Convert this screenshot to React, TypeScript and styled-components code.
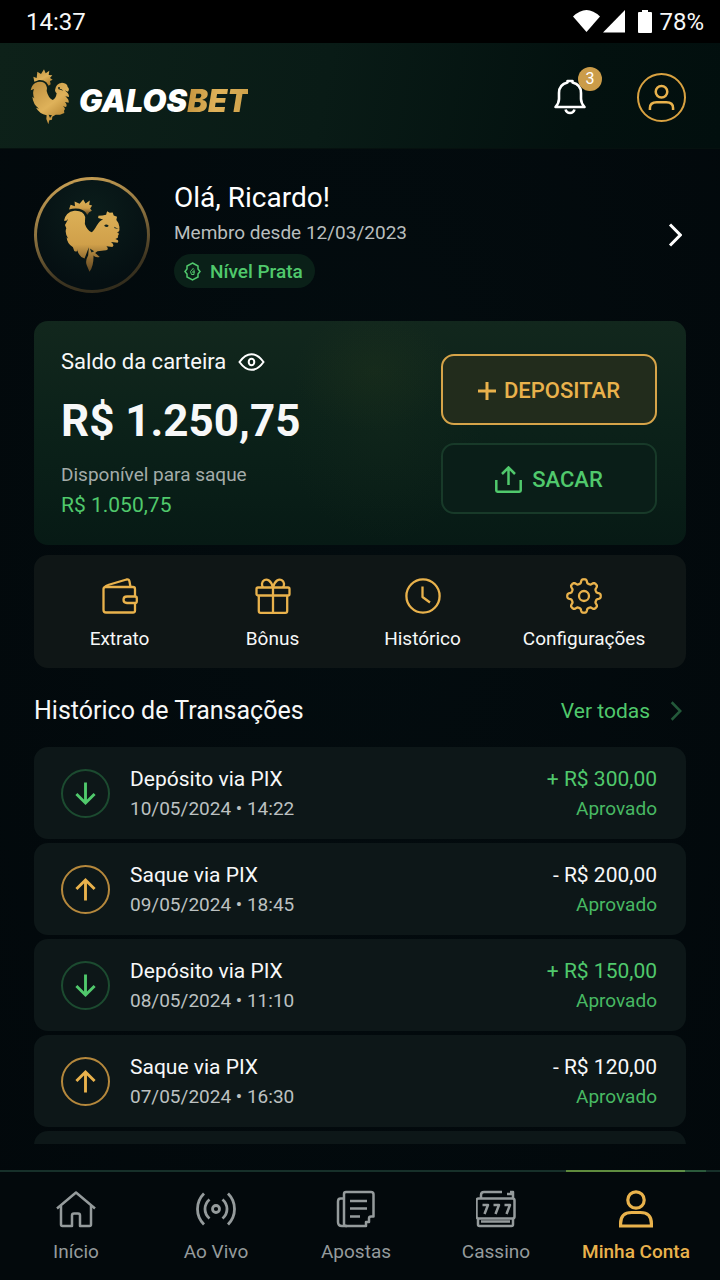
import styled, { createGlobalStyle } from "styled-components"

const gold = '#e9b24c'
const green = '#50c96c'

const GlobalStyle = createGlobalStyle`
    * {
        box-sizing: border-box;
    }

    body {
        margin: 0;
        background-color: #02090c;
        color: #f7f8f8;
        font-family: Roboto, "Liberation Sans", sans-serif;
    }

    h1, h2, p, ul {
        margin: 0;
        padding: 0;
    }

    ul {
        list-style: none;
    }

    a {
        color: inherit;
        text-decoration: none;
    }

    button {
        padding: 0;
        border: none;
        background: none;
        color: inherit;
        font-family: inherit;
        cursor: pointer;
    }

    svg {
        display: block;
        flex-shrink: 0;
    }
`

const Page = styled.div`
    height: 100vh;
    display: flex;
    flex-direction: column;
    background: radial-gradient(ellipse at 50% 40%, #030c0f, #02080b);
`

const StatusBar = styled.div`
    height: 43px;
    flex-shrink: 0;
    padding: 0 16px 0 26px;
    display: flex;
    align-items: center;
    justify-content: space-between;
    background-color: #000;
    font-size: 24px;
    line-height: 28px;

    .status__icons {
        display: flex;
        align-items: center;
    }

    .status__battery {
        margin: 0 7px 0 12px;
    }
`

const HeaderStyles = styled.header`
    height: 106px;
    flex-shrink: 0;
    padding: 3px 34px 0 30px;
    display: flex;
    align-items: center;
    justify-content: space-between;
    background: linear-gradient(100deg, #0d2119 0%, #091b16 45%, #03110f 80%, #020f0e 100%);
    border-bottom: 1px solid #06110f;

    .header__actions {
        display: flex;
        align-items: center;
        gap: 51px;
    }
`

const Logo = styled.a`
    display: flex;
    align-items: center;
    gap: 9px;
    font-family: Inter, Roboto, sans-serif;
    font-size: 31px;
    line-height: 40px;
    font-weight: 900;
    font-style: italic;
    color: #fff;

    .logo__name {
        padding-top: 8px;
    }

    .logo__accent {
        background: linear-gradient(100deg, #c4933d, #dfb25a 50%, #cc9f48);
        background-clip: text;
        color: transparent;
    }
`

const BellButton = styled.button`
    position: relative;

    .bell__badge {
        position: absolute;
        top: -12px;
        right: -16px;
        width: 24px;
        height: 24px;
        border-radius: 50%;
        background-color: #cb9c49;
        color: #fff;
        font-size: 16px;
        line-height: 24px;
        text-align: center;
    }
`

const AccountButton = styled.button`
    width: 49px;
    height: 49px;
    display: grid;
    place-items: center;
    border: 2px solid #d9a241;
    border-radius: 50%;
`

const Content = styled.main`
    flex: 1;
    min-height: 0;
    margin-bottom: 26px;
    padding: 28px 34px 0;
    overflow: hidden;
`

const Profile = styled.a`
    display: flex;
    align-items: center;
    gap: 24px;
    padding-right: 4px;

    .profile__info {
        flex: 1;
        padding-bottom: 2px;
        display: flex;
        flex-direction: column;
        align-items: flex-start;
    }

    .profile__name {
        font-size: 28px;
        line-height: 36px;
        font-weight: 400;
        color: #fff;
    }

    .profile__since {
        margin-bottom: 4px;
        font-size: 19px;
        line-height: 34px;
        color: #b9bebe;
    }
`

const Avatar = styled.div`
    width: 116px;
    height: 116px;
    display: grid;
    place-items: center;
    border: 3px solid transparent;
    border-radius: 50%;
    background:
        radial-gradient(circle at 50% 30%, #0b1d1b, #050f12 75%) padding-box,
        linear-gradient(165deg, #d3a857, #8f7440 40%, #3e3521 75%, #2b2719) border-box;
`

const Level = styled.span`
    height: 34px;
    padding: 0 12px 0 10px;
    display: flex;
    align-items: center;
    gap: 9px;
    border-radius: 17px;
    background-color: #0a2018;
    color: ${green};
    font-size: 19px;
    font-weight: 500;
`

const Balance = styled.section`
    margin-top: 28px;
    padding: 25px 29px 23px 27px;
    min-height: 224px;
    display: flex;
    align-items: center;
    justify-content: space-between;
    border-radius: 14px;
    background:
        radial-gradient(ellipse 80px 60px at 340px 50px, rgba(40, 58, 28, 0.25), transparent),
        radial-gradient(ellipse 100px 110px at 350px 110px, rgba(30, 50, 30, 0.2), transparent),
        linear-gradient(180deg, #12271d 0%, #0b2119 50%, #071a15 100%);

    .balance__title {
        display: flex;
        align-items: center;
        gap: 12px;
        font-size: 22px;
        line-height: 30px;
    }

    .balance__total {
        margin-top: 12px;
        font-size: 44px;
        line-height: 64px;
        font-weight: 700;
    }

    .balance__label {
        margin-top: 8px;
        font-size: 19px;
        line-height: 28px;
        color: #a4aca9;
    }

    .balance__available {
        font-size: 21px;
        line-height: 32px;
        color: ${green};
    }

    .balance__buttons {
        width: 216px;
        display: grid;
        gap: 18px;
    }
`

const WalletButton = styled.button<{ $primary?: boolean }>`
    height: 71px;
    padding-top: 2px;
    display: flex;
    align-items: center;
    justify-content: center;
    gap: ${props => props.$primary ? '8px' : '10px'};
    border: 2px solid ${props => props.$primary ? '#d6a449' : '#183a29'};
    border-radius: 13px;
    background-color: ${props => props.$primary ? '#222c1c' : '#0a1e18'};
    color: ${props => props.$primary ? gold : green};
    font-size: 22px;
    font-weight: 500;
`

const Shortcuts = styled.nav`
    height: 113px;
    margin-top: 10px;
    padding: 0 14px 0 9px;
    display: grid;
    grid-template-columns: 153fr 153fr 147fr 176fr;
    border-radius: 14px;
    background-color: #0f1616;
`

const Shortcut = styled.a`
    padding-top: 23px;
    display: flex;
    flex-direction: column;
    align-items: center;
    gap: 11px;
    font-size: 19px;
    line-height: 28px;

    svg {
        color: ${gold};
    }
`

const SectionHeader = styled.div`
    height: 79px;
    padding: 6px 4px 0 0;
    display: flex;
    align-items: center;
    justify-content: space-between;

    h2 {
        font-size: 25px;
        font-weight: 400;
        line-height: 32px;
    }

    a {
        display: flex;
        align-items: center;
        gap: 20px;
        color: ${green};
        font-size: 21px;
    }
`

const TransactionList = styled.ul`
    display: grid;
    gap: 4px;
`

const TransactionStyles = styled.li<{ $income: boolean }>`
    height: 92px;
    padding: 0 29px 0 27px;
    display: flex;
    align-items: center;
    gap: 20px;
    border-radius: 14px;
    background-color: #0d1718;

    .transaction__icon {
        width: 49px;
        height: 49px;
        display: grid;
        place-items: center;
        border: 2px solid ${props => props.$income ? '#1c4b30' : '#b5883c'};
        border-radius: 50%;
        color: ${props => props.$income ? green : gold};
    }

    .transaction__text {
        flex: 1;
        padding-top: 2px;
        font-size: 21px;
        line-height: 30px;
    }

    .transaction__text--right {
        flex: none;
        text-align: right;
    }

    .transaction__amount {
        color: ${props => props.$income ? green : '#f7f8f8'};
    }

    .transaction__date {
        font-size: 19px;
        color: #bcc1c1;
    }

    .transaction__status {
        font-size: 19px;
        color: #48b963;
    }
`

const TabBar = styled.nav`
    height: 110px;
    flex-shrink: 0;
    padding: 0 14px 0 6px;
    display: grid;
    grid-template-columns: repeat(5, 1fr);
    background: linear-gradient(#17302a, #17302a) top / 100% 2px no-repeat #03090c;
`

const Tab = styled.a<{ $active?: boolean }>`
    padding-top: 20px;
    display: flex;
    flex-direction: column;
    align-items: center;
    gap: 10px;
    background: ${props => props.$active
        ? 'linear-gradient(90deg, #5f8a3c 0%, #5f9146 85%, #2b5a3b 85%) top / 100% 2px no-repeat'
        : 'none'};
    color: ${props => props.$active ? gold : '#959b9c'};
    font-size: 19px;
    font-weight: ${props => props.$active ? 500 : 400};
    line-height: 28px;
`

const Chevron = ({ color, size = 24 }: { color: string, size?: number }) => (
    <svg width={size * 0.6} height={size} viewBox="0 0 14.4 24" fill="none" stroke={color} strokeWidth="3">
        <path d="M2 1.500 12.300 12 2 22.500" />
    </svg>
)

const LogoRooster = () => (
    <svg width="40" height="56" viewBox="0 0 120 168">
        <defs>
            <linearGradient id="logoGold" x1="0" y1="0" x2="0.7" y2="1">
                <stop offset="0" stopColor="#b98c3c" />
                <stop offset="0.6" stopColor="#dfb25a" />
                <stop offset="1" stopColor="#b1812f" />
            </linearGradient>
        </defs>
        <g fill="url(#logoGold)">
            <path d="M13 38 10 23 20 27 22 8 33 15 42 1 47 13 58 5 56 18 67 19 60 27 68 32 60 36 62 46 56 50 49 40Q40 32 27 33Z" />
            <path d="M2 64Q6 43 23 39Q44 36 49 50Q53 57 50 66Q55 87 68 93Q78 88 80 73Q76 72 75 64Q77 43 96 41Q112 42 113 54Q120 60 114 68L104 64Q118 74 117 84L106 82Q118 92 116 101L105 99Q113 108 108 114L98 112Q109 118 102 125L103 132 90 137 77 137 67 143 66 152 58 154 55 166 49 150 50 139Q28 134 18 116L27 119Q9 106 7 83L13 88Q6 73 12 60Z" />
        </g>
        <circle cx="87" cy="57" r="3" fill="#13251a" />
        <path d="M84 60Q94 58 100 65M56 137l10 2-6 8z" fill="#13251a" />
    </svg>
)

const AvatarRooster = () => (
    <svg width="58" height="75" viewBox="0 0 175 225">
        <defs>
            <linearGradient id="avatarGold" x1="0" y1="0" x2="0" y2="1">
                <stop offset="0" stopColor="#dcb057" />
                <stop offset="0.55" stopColor="#d0a04a" />
                <stop offset="0.8" stopColor="#8d6930" />
                <stop offset="1" stopColor="#5f4722" />
            </linearGradient>
        </defs>
        <g fill="url(#avatarGold)">
            <path d="M18 34 23 20 36 24 35 10 50 17 61 4 68 16 81 7 79 20 88 22 82 31 87 38 79 42 73 51Q67 36 49 32Q33 30 18 34Z" />
            <path d="M3 68Q8 42 34 38Q61 36 67 57L66 78Q72 96 86 103Q93 99 101 84Q111 66 121 64L106 60 107 53 119 52 130 50 133 39 141 44 150 43 153 52 163 56 161 66Q172 78 170 91Q172 103 162 103Q173 105 165 114Q170 120 158 123Q171 126 165 134L145 132Q157 142 149 147L131 145Q140 154 130 157L104 160 97 165 111 177Q97 180 92 173Q93 205 80 222L72 203Q66 190 76 172L78 148 65 182Q48 178 42 153Q46 165 34 159L30 148Q12 137 11 118L16 122Q4 104 10 91L6 81 16 62 10 68Z" />
        </g>
        <path d="M124 83Q130 76 138 83Q133 91 124 83M154 86L168 93 156 91M81 152l13 8-8 4z" fill="#102320" />
    </svg>
)

const WifiIcon = () => (
    <svg width="27" height="23" viewBox="0 0 27 23" fill="#fff">
        <path d="M0 6.5Q13.500-6.500 27 6.500L13.500 22Z" />
    </svg>
)

const SignalIcon = () => (
    <svg width="26" height="23" viewBox="0 0 26 23" fill="#fff">
        <path d="M25 0V22.500H3Z" />
    </svg>
)

const BatteryIcon = () => (
    <svg className="status__battery" width="14" height="23" viewBox="0 0 14 23" fill="#fff">
        <path d="M4 0h6v2h3q1 0 1 1v19q0 1-1 1H1q-1 0-1-1V3q0-1 1-1h3z" />
    </svg>
)

const BellIcon = () => (
    <svg width="32" height="36" viewBox="0 0 32 36" fill="none" stroke="#fff" strokeWidth="2.6" strokeLinejoin="round">
        <path d="M13.500 3.500V2h5v1.500C25 5 27 9 27 14v6q0 4 3.500 8H1.500Q5 24 5 20v-6C5 9 7 5 13.500 3.500Z" />
        <path d="M11.500 30.500q1 3.500 4.500 3.500t4.500-3.500" />
    </svg>
)

const AccountIcon = () => (
    <svg width="27" height="27" viewBox="0 0 28 28" fill="none" stroke={gold} strokeWidth="2.600">
        <circle cx="14" cy="8" r="6" />
        <path d="M2 27v-2q0-6 7-6h10q7 0 7 6v2" />
    </svg>
)

const LevelIcon = () => (
    <svg width="17" height="19" viewBox="0 0 17 19" fill="none" stroke={green} strokeWidth="1.5">
        <path d="M8.500 1 14 4v3l2 2.500-2 2.500v3l-5.500 3L3 15v-3L1 9.500 3 7V4Z" />
        <path d="M9.500 6 6.500 9.500l1 3h2.500V7.500M8 10h3" strokeWidth="1" />
    </svg>
)

const EyeIcon = () => (
    <svg width="27" height="18" viewBox="0 0 27 18" fill="none" stroke="#fff" strokeWidth="2">
        <path d="M1.500 9Q7 1.200 13.500 1.200T25.500 9Q20 16.800 13.500 16.800T1.500 9Z" />
        <ellipse cx="13.500" cy="9" rx="2.800" ry="3.300" />
    </svg>
)

const PlusIcon = () => (
    <svg width="18" height="18" viewBox="0 0 18 18" fill="none" stroke={gold} strokeWidth="3">
        <path d="M9 0V18M0 9H18" />
    </svg>
)

const UploadIcon = () => (
    <svg width="27" height="27" viewBox="0 0 27 27" fill="none" stroke={green} strokeWidth="2.500">
        <path d="M13.500 19V2M7 8l6.500-6.500L20 8" />
        <path d="M1.300 14v10.500q0 1.200 1.200 1.200h22q1.200 0 1.200-1.200V14" />
    </svg>
)

const iconProps = {
    width: 36,
    height: 36,
    viewBox: '0 0 36 36',
    fill: 'none',
    stroke: 'currentColor',
    strokeWidth: 2.3,
    strokeLinejoin: 'round' as const,
}

const WalletIcon = () => (
    <svg {...iconProps}>
        <path d="M33 18.500V11q0-2-2-2H3.500q-2 0-2 2v21q0 2.500 2.500 2.500h27q2 0 2-2V25" />
        <path d="M3 9Q4 7.500 6 7L24.500 1.500Q27 1 27.500 3.500L28.500 9" />
        <path d="M33 18.500H25q-3.500 0-3.500 3.200T25 25h8q1.800 0 1.800-1.800v-3q0-1.700-1.800-1.700Z" />
    </svg>
)

const GiftIcon = () => (
    <svg {...iconProps}>
        <rect x="1.500" y="9.500" width="33" height="8" rx="1.500" />
        <path d="M3.800 17.500V33q0 1.800 1.800 1.800h24.800q1.800 0 1.800-1.800V17.500M18 9.500V35" />
        <path d="M18 9.500C16 2 12 1 9.500 2 6.500 3.500 6.500 7 8 9.500M18 9.500C20 2 24 1 26.500 2c3 1.500 3 5 1.500 7.500" />
    </svg>
)

const ClockIcon = () => (
    <svg {...iconProps}>
        <circle cx="18" cy="18" r="16.600" />
        <path d="M17.500 8.500V19L25 24.500" />
    </svg>
)

// eight rounded teeth around the circle
const gearPoints = Array.from({ length: 160 }, (_, i) => {
    const angle = i / 160 * Math.PI * 2
    const radius = 14.8 + 2 * Math.tanh(2 * Math.cos(angle * 8))
    return `${(18 + radius * Math.cos(angle)).toFixed(2)},${(18 + radius * Math.sin(angle)).toFixed(2)}`
}).join(' ')

const GearIcon = () => (
    <svg {...iconProps}>
        <polygon points={gearPoints} />
        <circle cx="18" cy="18" r="5" />
    </svg>
)

const ArrowIcon = ({ up }: { up: boolean }) => (
    <svg width="23" height="25" viewBox="0 0 24 26" fill="none" stroke="currentColor" strokeWidth="3">
        {up
            ? <path d="M12 24.500V3M2.500 12.500 12 3l9.500 9.500" />
            : <path d="M12 1.500V23M2.500 13.500 12 23l9.500-9.500" />}
    </svg>
)

const tabIconProps = {
    width: 40,
    height: 38,
    viewBox: '0 0 40 38',
    fill: 'none',
    stroke: 'currentColor',
    strokeWidth: 2.5,
    strokeLinejoin: 'round' as const,
}

const HomeIcon = () => (
    <svg {...tabIconProps}>
        <path d="M1 18.500 20 2.500l19 16" />
        <path d="M5 16v18.500q0 1.500 1.500 1.500H16V25.500q0-2 2-2h4q2 0 2 2V36h9.500q1.500 0 1.500-1.500V16" />
    </svg>
)

const LiveIcon = () => (
    <svg {...tabIconProps} strokeWidth="2.800">
        <circle cx="20" cy="19" r="3.500" />
        <path d="M8 3.500Q1.500 10 1.500 19T8 34.500M32 3.500q6.500 6.500 6.500 15.500T32 34.500M13.500 9.500Q9 13.500 9 19t4.500 9.500M26.500 9.500Q31 13.500 31 19t-4.500 9.500" />
    </svg>
)

const BetsIcon = () => (
    <svg {...tabIconProps}>
        <path d="M10 2h25q2.500 0 2.500 2.500V26.500H35q-2 0-2 2V32h-3v4H10q-2 0-2-2V4q0-2 2-2Z" />
        <path d="M8 8.500H4.500q-2.500 0-2.500 3V32q0 4 4 4h5M14 11h17M14 18.500h17M14 26.500h10" />
    </svg>
)

const SlotsIcon = () => (
    <svg {...tabIconProps}>
        <path d="M5 8V5q0-3 3-3h18M31 4h4.500l1.500-1.500M34 2h3v6M2.500 8.500h34q2 0 2 2v16q0 2-2 2h-34q-2 0-2-2v-16q0-2 2-2Z" />
        <path d="M2 29v5.500q0 1.500 1.500 1.500h32q1.500 0 1.500-1.500V29M5 31.500h29" />
        <path d="M6.500 15h5.500l-3.500 9M17.500 15H23l-3.500 9M28.500 15H34l-3.500 9" />
    </svg>
)

const PersonIcon = () => (
    <svg {...tabIconProps} strokeWidth="3.200">
        <circle cx="20" cy="10" r="8.200" />
        <path d="M4.600 36v-2.500q0-11 11-11h8.800q11 0 11 11V36Z" strokeLinejoin="miter" />
    </svg>
)

const shortcuts = [
    { label: 'Extrato', Icon: WalletIcon },
    { label: 'Bônus', Icon: GiftIcon },
    { label: 'Histórico', Icon: ClockIcon },
    { label: 'Configurações', Icon: GearIcon },
]

const transactions = [
    { income: true, title: 'Depósito via PIX', date: '10/05/2024 • 14:22', amount: '+ R$ 300,00' },
    { income: false, title: 'Saque via PIX', date: '09/05/2024 • 18:45', amount: '- R$ 200,00' },
    { income: true, title: 'Depósito via PIX', date: '08/05/2024 • 11:10', amount: '+ R$ 150,00' },
    { income: false, title: 'Saque via PIX', date: '07/05/2024 • 16:30', amount: '- R$ 120,00' },
]

const tabs = [
    { label: 'Início', Icon: HomeIcon },
    { label: 'Ao Vivo', Icon: LiveIcon },
    { label: 'Apostas', Icon: BetsIcon },
    { label: 'Cassino', Icon: SlotsIcon },
    { label: 'Minha Conta', Icon: PersonIcon, active: true },
]

const Transaction = (props: typeof transactions[number]) => {
    return (
        <TransactionStyles $income={props.income}>
            <span className="transaction__icon">
                <ArrowIcon up={!props.income} />
            </span>

            <div className="transaction__text">
                <p>{props.title}</p>
                <p className="transaction__date">{props.date}</p>
            </div>

            <div className="transaction__text transaction__text--right">
                <p className="transaction__amount">{props.amount}</p>
                <p className="transaction__status">Aprovado</p>
            </div>
        </TransactionStyles>
    )
}

const App = () => {
    return (
        <Page>
            <GlobalStyle />

            <StatusBar>
                <span>14:37</span>

                <div className="status__icons">
                    <WifiIcon />
                    <SignalIcon />
                    <BatteryIcon />
                    <span>78%</span>
                </div>
            </StatusBar>

            <HeaderStyles>
                <Logo href="#">
                    <LogoRooster />
                    <span className="logo__name">GALOS<span className="logo__accent">BET</span></span>
                </Logo>

                <div className="header__actions">
                    <BellButton type="button">
                        <BellIcon />
                        <span className="bell__badge">3</span>
                    </BellButton>

                    <AccountButton type="button">
                        <AccountIcon />
                    </AccountButton>
                </div>
            </HeaderStyles>

            <Content>
                <Profile href="#">
                    <Avatar>
                        <AvatarRooster />
                    </Avatar>

                    <div className="profile__info">
                        <h1 className="profile__name">Olá, Ricardo!</h1>
                        <p className="profile__since">Membro desde 12/03/2023</p>
                        <Level>
                            <LevelIcon />
                            Nível Prata
                        </Level>
                    </div>

                    <Chevron color="#fff" />
                </Profile>

                <Balance>
                    <div>
                        <p className="balance__title">
                            Saldo da carteira
                            <button type="button">
                                <EyeIcon />
                            </button>
                        </p>
                        <p className="balance__total">R$ 1.250,75</p>
                        <p className="balance__label">Disponível para saque</p>
                        <p className="balance__available">R$ 1.050,75</p>
                    </div>

                    <div className="balance__buttons">
                        <WalletButton type="button" $primary>
                            <PlusIcon />
                            DEPOSITAR
                        </WalletButton>

                        <WalletButton type="button">
                            <UploadIcon />
                            SACAR
                        </WalletButton>
                    </div>
                </Balance>

                <Shortcuts>
                    {shortcuts.map(({ label, Icon }) => (
                        <Shortcut href="#" key={label}>
                            <Icon />
                            {label}
                        </Shortcut>
                    ))}
                </Shortcuts>

                <SectionHeader>
                    <h2>Histórico de Transações</h2>
                    <a href="#">
                        Ver todas
                        <Chevron color="#23593a" size={20} />
                    </a>
                </SectionHeader>

                <TransactionList>
                    {transactions.map(transaction => (
                        <Transaction key={transaction.date} {...transaction} />
                    ))}
                    <TransactionStyles $income />
                </TransactionList>
            </Content>

            <TabBar>
                {tabs.map(({ label, Icon, active }) => (
                    <Tab href="#" key={label} $active={active}>
                        <Icon />
                        {label}
                    </Tab>
                ))}
            </TabBar>
        </Page>
    )
}

export default App
